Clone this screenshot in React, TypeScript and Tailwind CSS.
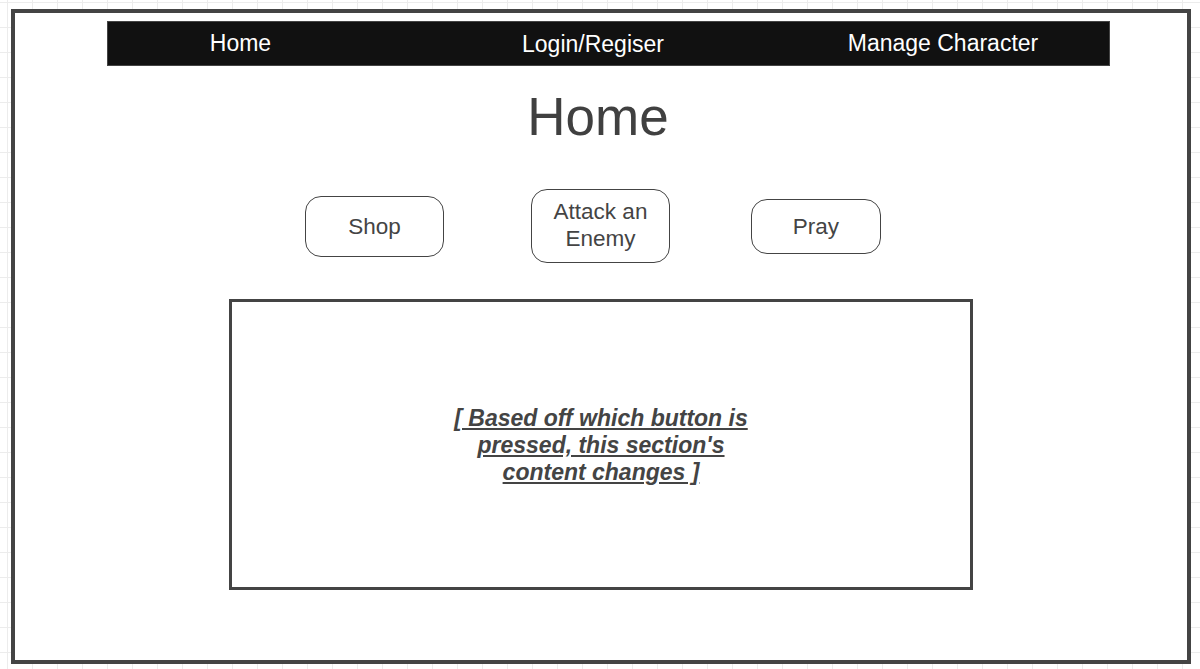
export default function App() {
  return (
    <div
      className="w-[1200px] h-[669px] overflow-hidden bg-white bg-[linear-gradient(to_right,#ececec_1px,transparent_1px),linear-gradient(to_bottom,#ececec_1px,transparent_1px)] bg-[size:25px_25px] bg-[position:7px_2px] pt-[9px] pl-[11px]"
      style={{ fontFamily: '"Liberation Sans", Arial, sans-serif' }}
    >
      <div className="w-[1180px] h-[655px] border-4 border-[#444] bg-white flex flex-col">
        {/* nav */}
        <nav className="ml-[92px] mt-[8px] w-[1003px] h-[45px] bg-[#111] border border-[#444] flex items-center text-white text-[23px]">
          <div className="w-[265px] text-center -mt-[1px]">Home</div>
          <div className="w-[440px] text-center mt-[1px]">Login/Regiser</div>
          <div className="w-[260px] text-center -mt-[1px]">Manage Character</div>
        </nav>

        <h1 className="mt-[24px] pr-[6px] text-center text-[53px] leading-none text-[#404040]">Home</h1>

        {/* action buttons */}
        <div className="mt-[46px] ml-[290px] flex items-center text-[22.5px] text-[#444] leading-[27px]">
          <button className="w-[139px] h-[61px] border border-[#444] rounded-[16px] bg-white">Shop</button>
          <button className="ml-[87px] w-[139px] h-[74px] border border-[#444] rounded-[16px] bg-white pb-[3px]">
            Attack an<br />Enemy
          </button>
          <button className="ml-[81px] w-[130px] h-[55px] border border-[#444] rounded-[16px] bg-white">Pray</button>
        </div>

        {/* content area */}
        <div className="mt-[36px] ml-[214px] w-[744px] h-[291px] border-[3px] border-[#444] flex items-center justify-center pt-[2px]">
          <p className="w-[320px] text-center text-[23px] leading-[27px] font-bold italic underline text-[#444]">
            [ Based off which button is pressed, this section's content changes ]
          </p>
        </div>
      </div>
    </div>
  );
}
